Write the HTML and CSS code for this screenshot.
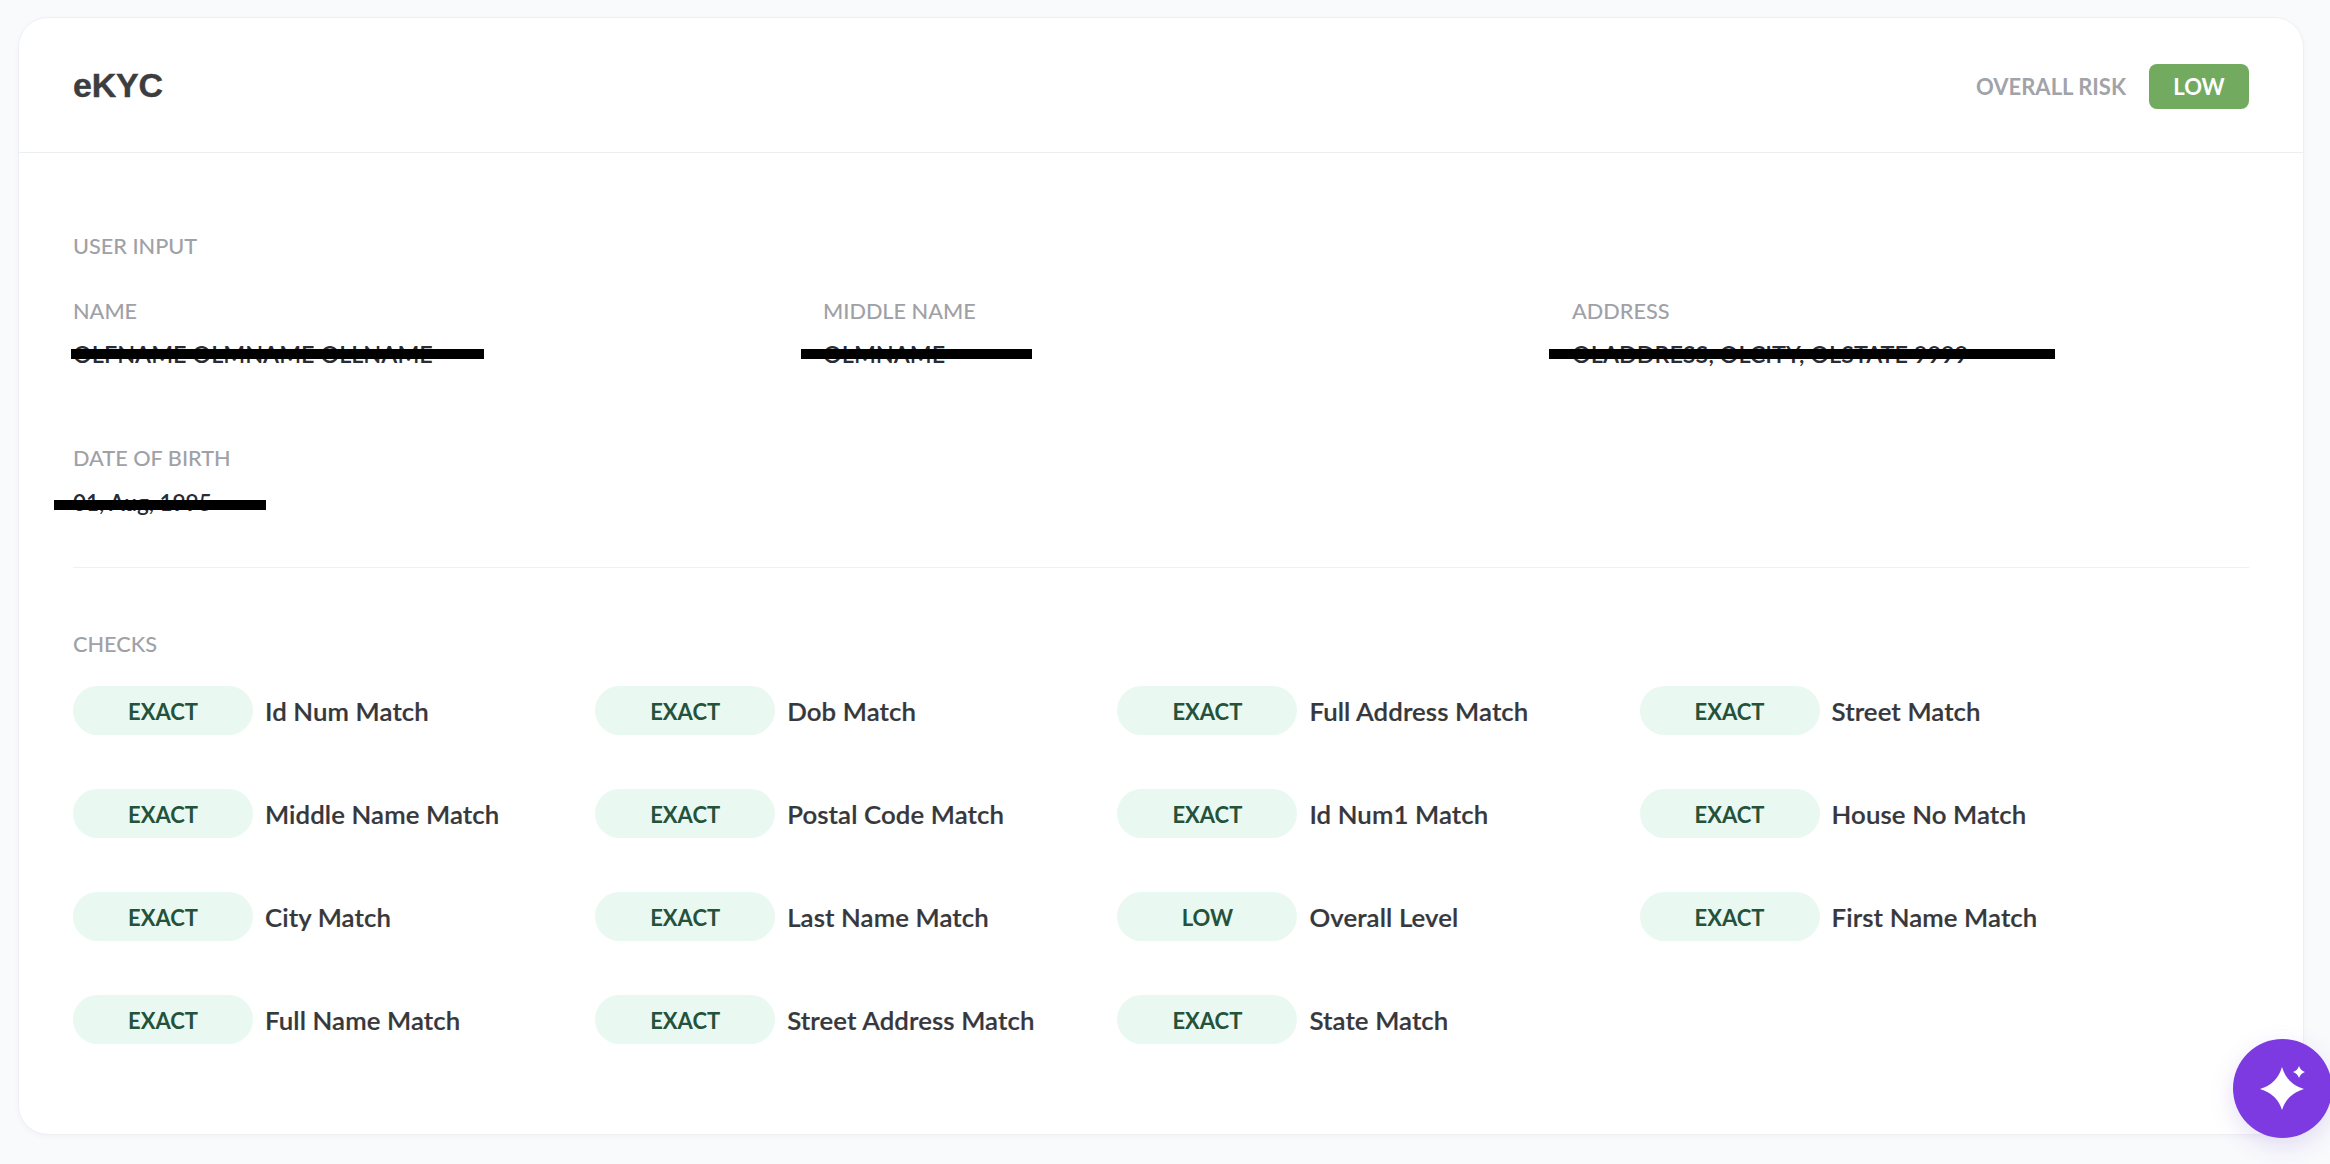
FILE: index.html
```html
<!DOCTYPE html>
<html>
<head>
	<meta charset="UTF-8">
	<title>eKYC</title>
	<link rel="stylesheet" href="styles.css">
</head>
<body>
	<div class="card">
		<div class="card-head">
			<h1 class="card-title">eKYC</h1>
			<div class="risk">
				<span class="risk-label">OVERALL RISK</span>
				<span class="risk-badge">LOW</span>
			</div>
		</div>
		<div class="card-body">
			<div class="section-title">USER INPUT</div>
			<div class="fields">
				<div class="field">
					<div class="field-label">NAME</div>
					<div class="field-value">OLFNAME OLMNAME OLLNAME<i class="redact redact-name"></i></div>
				</div>
				<div class="field">
					<div class="field-label">MIDDLE NAME</div>
					<div class="field-value">OLMNAME<i class="redact redact-middle"></i></div>
				</div>
				<div class="field">
					<div class="field-label">ADDRESS</div>
					<div class="field-value">OLADDRESS, OLCITY, OLSTATE 9999<i class="redact redact-address"></i></div>
				</div>
				<div class="field">
					<div class="field-label">DATE OF BIRTH</div>
					<div class="field-value field-value-dob">01, Aug, 1995<i class="redact redact-dob"></i></div>
				</div>
			</div>
			<div class="divider"></div>
			<div class="section-title">CHECKS</div>
			<div class="checks">
				<div class="check"><span class="pill">EXACT</span><span class="check-name">Id Num Match</span></div>
				<div class="check"><span class="pill">EXACT</span><span class="check-name">Dob Match</span></div>
				<div class="check"><span class="pill">EXACT</span><span class="check-name">Full Address Match</span></div>
				<div class="check"><span class="pill">EXACT</span><span class="check-name">Street Match</span></div>
				<div class="check"><span class="pill">EXACT</span><span class="check-name">Middle Name Match</span></div>
				<div class="check"><span class="pill">EXACT</span><span class="check-name">Postal Code Match</span></div>
				<div class="check"><span class="pill">EXACT</span><span class="check-name">Id Num1 Match</span></div>
				<div class="check"><span class="pill">EXACT</span><span class="check-name">House No Match</span></div>
				<div class="check"><span class="pill">EXACT</span><span class="check-name">City Match</span></div>
				<div class="check"><span class="pill">EXACT</span><span class="check-name">Last Name Match</span></div>
				<div class="check"><span class="pill">LOW</span><span class="check-name">Overall Level</span></div>
				<div class="check"><span class="pill">EXACT</span><span class="check-name">First Name Match</span></div>
				<div class="check"><span class="pill">EXACT</span><span class="check-name">Full Name Match</span></div>
				<div class="check"><span class="pill">EXACT</span><span class="check-name">Street Address Match</span></div>
				<div class="check"><span class="pill">EXACT</span><span class="check-name">State Match</span></div>
			</div>
		</div>
	</div>
	<button class="fab" type="button" aria-label="Assistant">
		<svg width="99" height="99" viewBox="0 0 99 99">
			<path fill="#fff" d="M49 28Q54 45 71 50Q54 55 49 71Q44 55 27 50Q44 45 49 28Z"/>
			<path fill="#fff" d="M66 27Q67.500 31.500 72 33Q67.500 34.500 66 39Q64.500 34.500 60 33Q64.500 31.500 66 27Z"/>
		</svg>
	</button>
</body>
</html>
```

FILE: styles.css
```css
* {box-sizing:border-box;}
html, body {height:100%;}
body {margin:0; padding:17px 26px 0 18px; overflow:hidden; background:#f9fafc; font-family:Lato, "Noto Sans", sans-serif; color:#3a3c40;}

.card {background:#fff; border:1px solid #eff0f4; border-radius:30px; box-shadow:0 2px 6px rgba(30,30,60,.03);}
.card-head {display:flex; align-items:center; justify-content:space-between; height:135px; padding:0 54px; border-bottom:1px solid #eceef1;}
.card-title {margin:0; font:bold 34px/1 "Liberation Sans", Arial, sans-serif; letter-spacing:-.2px; color:#3c3d40; -webkit-text-stroke:.4px #3c3d40;}
.risk {display:flex; align-items:center; gap:23px; padding-top:2px;}
.risk-label {font-size:22px; font-weight:700; color:#a2a3a8;}
.risk-badge {width:100px; height:45px; line-height:45px; text-align:center; font-size:22px; font-weight:700; color:#fff; background:#72ab60; border-radius:8px;}

.card-body {padding:79px 54px 90px;}
.section-title {font-size:21.700px; line-height:28px; font-weight:500; color:#a0a1a6;}
.fields {display:grid; grid-template-columns:678px 677px 677px; column-gap:72px; row-gap:76px; margin-top:37px;}
.field-label {font-size:21.700px; line-height:28px; font-weight:500; color:#a0a1a6;}
.field-value {position:relative; margin-top:15px; font-size:23.400px; line-height:28px; font-weight:600; color:#2a2c35;}
.field-value-dob {margin-top:17px; margin-bottom:-2px; font-size:22.500px;}
.redact {position:absolute; top:9px; height:10px; background:#000;}
.redact-name {left:-2px; width:413px;}
.redact-middle {left:-22px; width:231px;}
.redact-address {left:-23px; width:506px;}
.redact-dob {left:-19px; width:212px; top:11px;}
.divider {height:1px; margin:52px 0 62px; background:#eef0f2;}

.checks {display:grid; grid-template-columns:repeat(4, 522.200px); row-gap:54px; margin-top:28px;}
.check {display:flex; align-items:center; gap:12px;}
.pill {width:180px; height:49px; line-height:51px; text-align:center; font-size:22px; font-weight:700; color:#24523a; background:#e9f9f2; border-radius:25px;}
.check-name {font-size:25.800px; font-weight:600; letter-spacing:.1px; color:#36383c; -webkit-text-stroke:.2px #36383c;}

.fab {position:fixed; left:2233px; top:1039px; width:99px; height:99px; padding:0; border:0; background:#7c3ae0; border-radius:50%; box-shadow:0 8px 24px rgba(90,50,190,.15);}
.fab svg {display:block;}
```
